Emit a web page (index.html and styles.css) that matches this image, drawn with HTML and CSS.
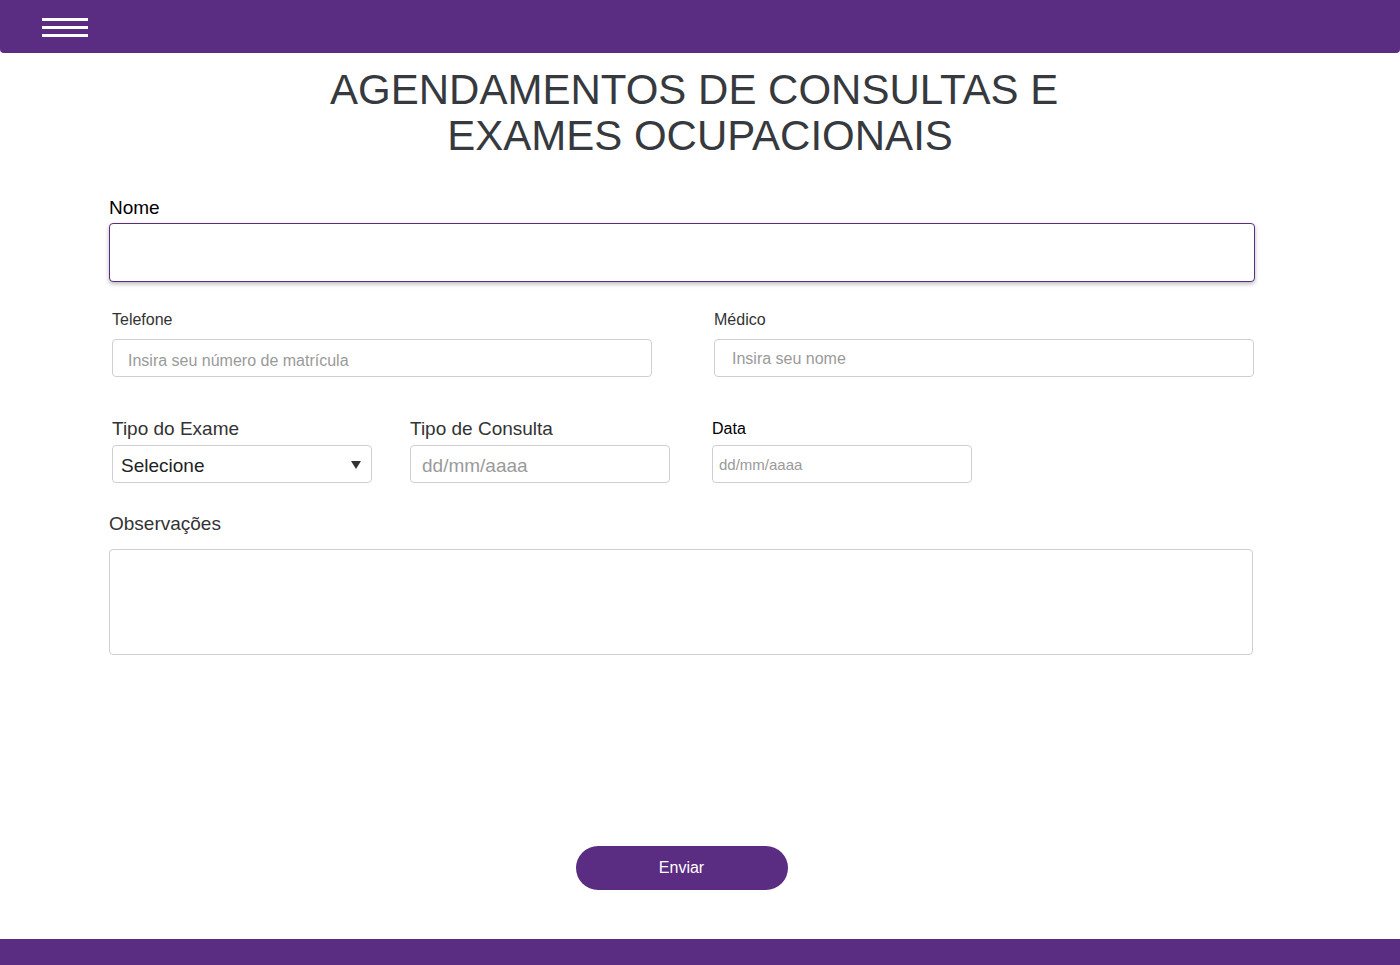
FILE: index.html
```html
<!DOCTYPE html>
<html lang="pt-BR">
<head>
<meta charset="utf-8">
<title>Agendamentos</title>
<link rel="stylesheet" href="styles.css">
</head>
<body>
<header class="topbar">
  <button class="menu-btn" type="button" aria-label="Menu">
    <span class="bar"></span><span class="bar"></span><span class="bar"></span>
  </button>
</header>
<main class="page">
  <h1 class="title">AGENDAMENTOS DE CONSULTAS E&nbsp;<br>EXAMES OCUPACIONAIS</h1>
  <form class="form">
    <label class="lbl lbl-nome" for="nome">Nome</label>
    <input class="inp inp-nome" id="nome" type="text">

    <div class="row row-two">
      <div class="field">
        <label class="lbl lbl-small" for="tel">Telefone</label>
        <input class="inp inp-std ph-tel" id="tel" type="text" placeholder="Insira seu número de matrícula">
      </div>
      <div class="field">
        <label class="lbl lbl-small" for="med">Médico</label>
        <input class="inp inp-std ph-med" id="med" type="text" placeholder="Insira seu nome">
      </div>
    </div>

    <div class="row row-three">
      <div class="field">
        <label class="lbl lbl-mid" for="exame">Tipo do Exame</label>
        <div class="select-wrap">
          <select class="inp inp-select" id="exame">
            <option>Selecione</option>
          </select>
        </div>
      </div>
      <div class="field">
        <label class="lbl lbl-mid" for="consulta">Tipo de Consulta</label>
        <input class="inp inp-std ph-big" id="consulta" type="text" placeholder="dd/mm/aaaa">
      </div>
      <div class="field field-data">
        <label class="lbl lbl-data" for="data">Data</label>
        <input class="inp inp-std ph-sm" id="data" type="text" placeholder="dd/mm/aaaa">
      </div>
    </div>

    <label class="lbl lbl-obs" for="obs">Observações</label>
    <textarea class="inp inp-obs" id="obs"></textarea>

    <button class="send" type="button">Enviar</button>
  </form>
</main>
<footer class="bottombar"></footer>
</body>
</html>
```

FILE: styles.css
```css
html, body {
  margin: 0;
  padding: 0;
}
body {
  font-family: "Liberation Sans", Arial, sans-serif;
  background: #fff;
  min-height: 965px;
  display: flex;
  flex-direction: column;
}
.topbar {
  height: 53px;
  background: #5b2d82;
  border-radius: 0 0 4px 4px;
  display: flex;
  align-items: flex-start;
}
.menu-btn {
  margin: 18px 0 0 42px;
  padding: 0;
  border: 0;
  background: transparent;
  display: flex;
  flex-direction: column;
  gap: 5px;
}
.bar {
  display: block;
  width: 46px;
  height: 3px;
  background: #fff;
}
.page {
  flex: 1;
  display: flex;
  flex-direction: column;
}
.title {
  margin: 14px 0 0;
  font-size: 42px;
  line-height: 46px;
  font-weight: 400;
  color: #363a3e;
  text-align: center;
}
.form {
  margin: 38px 0 0 109px;
  width: 1145px;
  display: flex;
  flex-direction: column;
}
.lbl {
  display: block;
}
.lbl-nome {
  font-size: 19px;
  line-height: 21px;
  color: #000;
  margin-bottom: 5px;
}
.inp {
  box-sizing: border-box;
  font-family: "Liberation Sans", Arial, sans-serif;
  border: 1px solid #cfcfcf;
  border-radius: 4px;
  background: #fff;
  outline: none;
  margin: 0;
}
.inp-nome {
  width: 1146px;
  height: 59px;
  border-color: #5b2d82;
  box-shadow: 0 2px 4px rgba(0, 0, 0, 0.28);
}
.row {
  display: grid;
  padding-left: 3px;
}
.row-two {
  grid-template-columns: 540px 540px;
  column-gap: 62px;
  margin-top: 29px;
}
.row-three {
  grid-template-columns: 260px 260px 264px;
  column-gap: 38px;
  margin-top: 41px;
}
.field {
  display: flex;
  flex-direction: column;
}
.field-data {
  padding-left: 4px;
}
.lbl-small {
  font-size: 16px;
  line-height: 17px;
  color: #333;
  margin-bottom: 11px;
}
.lbl-mid {
  font-size: 19px;
  line-height: 21px;
  color: #333;
  margin-bottom: 6px;
}
.lbl-data {
  font-size: 16px;
  line-height: 21px;
  color: #000;
  margin-bottom: 6px;
}
.inp-std {
  height: 38px;
  width: 100%;
  color: #333;
}
.ph-tel {
  font-size: 16px;
  padding: 6px 0 0 15px;
}
.ph-med {
  font-size: 16px;
  padding: 2px 0 0 17px;
}
.ph-big {
  font-size: 19px;
  padding: 4px 0 0 11px;
}
.ph-sm {
  font-size: 15px;
  padding: 0 0 0 6px;
}
.inp::placeholder {
  color: #9a9a9a;
  opacity: 1;
}
.select-wrap {
  position: relative;
  width: 260px;
}
.select-wrap::after {
  content: "";
  position: absolute;
  right: 11px;
  top: 16px;
  border-left: 5px solid transparent;
  border-right: 5px solid transparent;
  border-top: 8px solid #333;
  pointer-events: none;
}
.inp-select {
  appearance: none;
  -webkit-appearance: none;
  width: 260px;
  height: 38px;
  font-size: 19px;
  color: #222;
  padding: 2px 0 0 8px;
}
.lbl-obs {
  font-size: 19px;
  line-height: 21px;
  color: #333;
  margin-top: 30px;
  margin-bottom: 15px;
}
.inp-obs {
  width: 1144px;
  height: 106px;
  resize: none;
  display: block;
}
.send {
  align-self: center;
  margin-top: 191px;
  width: 212px;
  height: 44px;
  border: 0;
  border-radius: 22px;
  background: #5b2d82;
  color: #fff;
  font-family: "Liberation Sans", Arial, sans-serif;
  font-size: 16px;
  padding: 0;
}
.bottombar {
  height: 26px;
  background: #5b2d82;
  flex-shrink: 0;
}
```
